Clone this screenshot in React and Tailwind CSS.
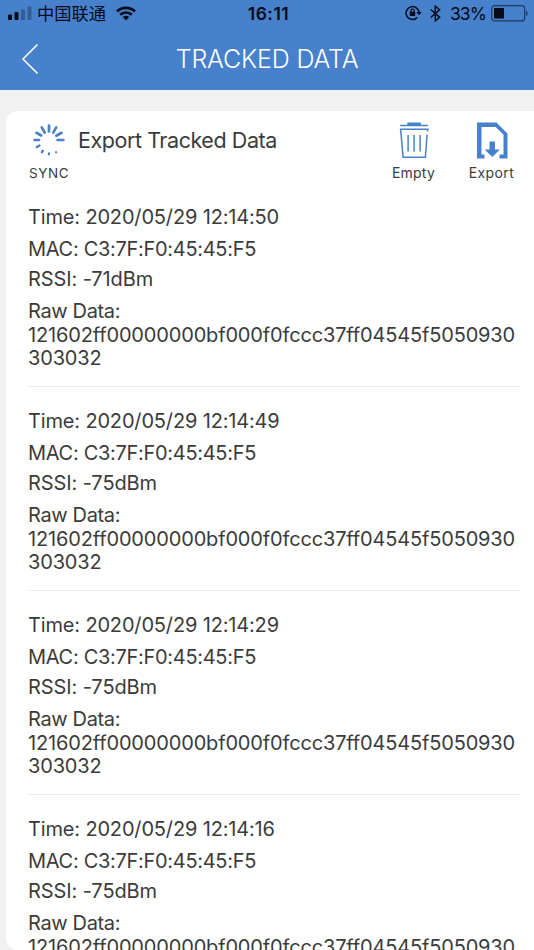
const RAW = ['121602ff00000000bf000f0fccc37ff04545f5050930', '303032'];

const records = [
  { time: '2020/05/29 12:14:50', mac: 'C3:7F:F0:45:45:F5', rssi: '-71dBm' },
  { time: '2020/05/29 12:14:49', mac: 'C3:7F:F0:45:45:F5', rssi: '-75dBm' },
  { time: '2020/05/29 12:14:29', mac: 'C3:7F:F0:45:45:F5', rssi: '-75dBm' },
  { time: '2020/05/29 12:14:16', mac: 'C3:7F:F0:45:45:F5', rssi: '-75dBm' },
];

function StatusBar() {
  return (
    <div className="grid h-7 grid-cols-[1fr_auto_1fr] items-center pl-2 pr-[7px] text-[#050b18]">
      <div className="flex items-center">
        <svg className="-mt-px" width="25" height="15" viewBox="0 0 25 15" fill="currentColor">
          <rect x="0" y="8.5" width="4" height="5.5" rx="1" />
          <rect x="6.5" y="6" width="4" height="8" rx="1" />
          <rect x="13" y="3.500" width="4" height="10.500" rx="1" opacity=".3" />
          <rect x="19.5" y=".5" width="4" height="13.5" rx="1" opacity=".3" />
        </svg>
        <span className="-mt-[2px] ml-1 font-['Noto_Sans_CJK_SC',sans-serif] text-[17.3px] leading-7">中国联通</span>
        <svg className="-mt-[2px] ml-2.5" width="20" height="15" viewBox="0 0 20 15" fill="none" stroke="currentColor" strokeWidth="2.7">
          <path d="M1 5.4C6 .7 14 .7 19 5.4" />
          <path d="M4.2 8.8c3.300-3.100 8.300-3.100 11.600 0" />
          <path d="M10 14.400l-3.200-3.300c1.900-1.700 4.500-1.700 6.400 0z" fill="currentColor" stroke="none" />
        </svg>
      </div>
      <span className="ml-[2px] text-[17.5px] font-semibold tracking-[0.5px]">16:11</span>
      <div className="flex items-center justify-end">
        <svg className="-mt-[2px]" width="17" height="16" viewBox="0 0 17 16" fill="none" stroke="currentColor" strokeWidth="1.5">
          <path d="M12.300 12.600A6.500 6.500 0 1 1 14 7" />
          <path d="M11.300 7h5.400L14 10.300z" fill="currentColor" stroke="none" />
          <rect x="4.800" y="6.800" width="5.400" height="4.200" rx=".5" fill="currentColor" stroke="none" />
          <path d="M5.900 7V5.700a1.600 1.600 0 0 1 3.200 0V7" strokeWidth="1.200" />
        </svg>
        <svg className="-mt-[2px] ml-2" width="11" height="17" viewBox="0 0 11 17" fill="none" stroke="currentColor" strokeWidth="1.500">
          <path d="M.8 4.500l8.800 7.800-4.300 3.500V1.200l4.300 3.500L.8 12.500" />
        </svg>
        <span className="ml-[9px] text-[17.500px] tracking-[-0.9px]">33%</span>
        <svg className="-mt-[2px] ml-[5px] -mr-px" width="37" height="17" viewBox="0 0 37 17">
          <rect x=".7" y=".7" width="33" height="15.200" rx="3" fill="none" stroke="currentColor" strokeWidth="1.200" opacity=".6" />
          <rect x="3" y="3" width="10" height="10.600" rx=".7" fill="currentColor" />
          <path d="M35.200 5.500c2 1 2 4.500 0 5.500z" fill="currentColor" opacity=".6" />
        </svg>
      </div>
    </div>
  );
}

function Header() {
  return (
    <header className="h-[90px] shrink-0 bg-[#4781cb]">
      <StatusBar />
      <div className="grid h-[62px] grid-cols-[60px_1fr_60px] items-center text-white">
        <svg className="ml-[21px]" width="19" height="32" viewBox="0 0 19 32" fill="none" stroke="currentColor" strokeWidth="1.500">
          <path d="M16.500 1.500L2 16l14.500 14.500" />
        </svg>
        <h1 className="text-center text-[25px] font-light leading-[62px] tracking-[-0.17px]">TRACKED DATA</h1>
      </div>
    </header>
  );
}

// Each spoke: angle, inner radius, outer radius, width
const spokes = [
  [0, 8.5, 14.5, 2.7], [30, 8.5, 14.5, 2.6], [60, 8.5, 14.5, 2.6], [90, 8.5, 14.5, 2.5],
  [150, 14, 14.2, 2.2], [180, 13.5, 14.3, 2.3], [210, 12.5, 14, 2.4], [240, 11, 14, 2.4],
  [270, 10, 14.5, 2.5], [300, 9, 14.5, 2.6], [330, 8.5, 14.5, 2.7],
];

function SyncIcon() {
  return (
    <svg width="32" height="32" viewBox="-16 -16 32 32" stroke="#4c80c2" strokeLinecap="round">
      {spokes.map(([a, r1, r2, w]) => (
        <line key={a} x1="0" x2="0" y1={-r1} y2={-r2} strokeWidth={w} transform={`rotate(${a})`} />
      ))}
    </svg>
  );
}

function TrashIcon() {
  return (
    <svg width="30" height="37" viewBox="-.6 0 30 37" fill="none" stroke="#4781cb" strokeWidth="1.500">
      <path d="M.5 3.400h28" />
      <path d="M8.500 3V1.300h12V3" fill="#4781cb" />
      <path d="M28 9.500l.2-2.300H1l2.500 28h22.300L27.500 12.500" />
      <path d="M8.500 13v16.500M14.500 13v16.500M20.500 13v16.500" />
    </svg>
  );
}

function ExportIcon() {
  return (
    <svg width="32" height="37" viewBox="0 0 32 37" fill="#4781cb">
      <path d="M1 .5h19.500l11 11V36.500h-8v-4h4V12.500l-8-7.500H5.500v27.500h3v4H1z" />
      <path d="M13.500 19.500h5.500v8h4.800L16.300 35l-7.600-7.500h4.800z" />
    </svg>
  );
}

function Toolbar() {
  return (
    <div className="flex h-[94px] pt-[11px]">
      <div className="flex flex-col">
        <div className="flex h-[37px] items-center">
          <div className="-mt-[2px] ml-[5px]"><SyncIcon /></div>
          <h2 className="ml-[13px] text-[21.500px] leading-[37px] tracking-[-0.44px]">Export Tracked Data</h2>
        </div>
        <span className="ml-px mt-1 text-[13.500px] leading-5 tracking-[0.6px]">SYNC</span>
      </div>
      <div className="ml-auto flex">
        <button className="flex w-[78px] flex-col items-center">
          <TrashIcon />
          <span className="mt-1 text-[14px] leading-5 tracking-[0.2px]">Empty</span>
        </button>
        <button className="flex w-[78px] flex-col items-center">
          <ExportIcon />
          <span className="mt-1 text-[14px] leading-5 tracking-[0.4px]">Export</span>
        </button>
      </div>
    </div>
  );
}

function Record({ time, mac, rssi }) {
  return (
    <li className="mb-[22px] h-[182px] whitespace-nowrap border-b border-[#ececec] text-[20px] leading-6">
      <p className="tracking-[-0.16px]">Time: {time}</p>
      <p className="mt-2 tracking-[-0.3px]">MAC: {mac}</p>
      <p className="mt-1.5 tracking-[-0.1px]">RSSI: {rssi}</p>
      <p className="mt-2 tracking-[-0.36px]">Raw Data:</p>
      {RAW.map((line) => (
        <p key={line} className="tracking-[-0.16px] last:-mt-px">{line}</p>
      ))}
    </li>
  );
}

export default function App() {
  return (
    <div className="flex h-[950px] w-[534px] flex-col overflow-hidden bg-[#f1f1f2] font-['Inter',sans-serif] text-[#3b3b3b]">
      <Header />
      <main className="ml-1.5 mt-[21px] h-[839px] shrink-0 overflow-hidden rounded-l-[12px] bg-white pl-[22px]">
        <div className="mr-[3.5px]">
          <Toolbar />
        </div>
        <ul className="mr-[13px]">
          {records.map((r) => (
            <Record key={r.time} {...r} />
          ))}
        </ul>
      </main>
    </div>
  );
}
